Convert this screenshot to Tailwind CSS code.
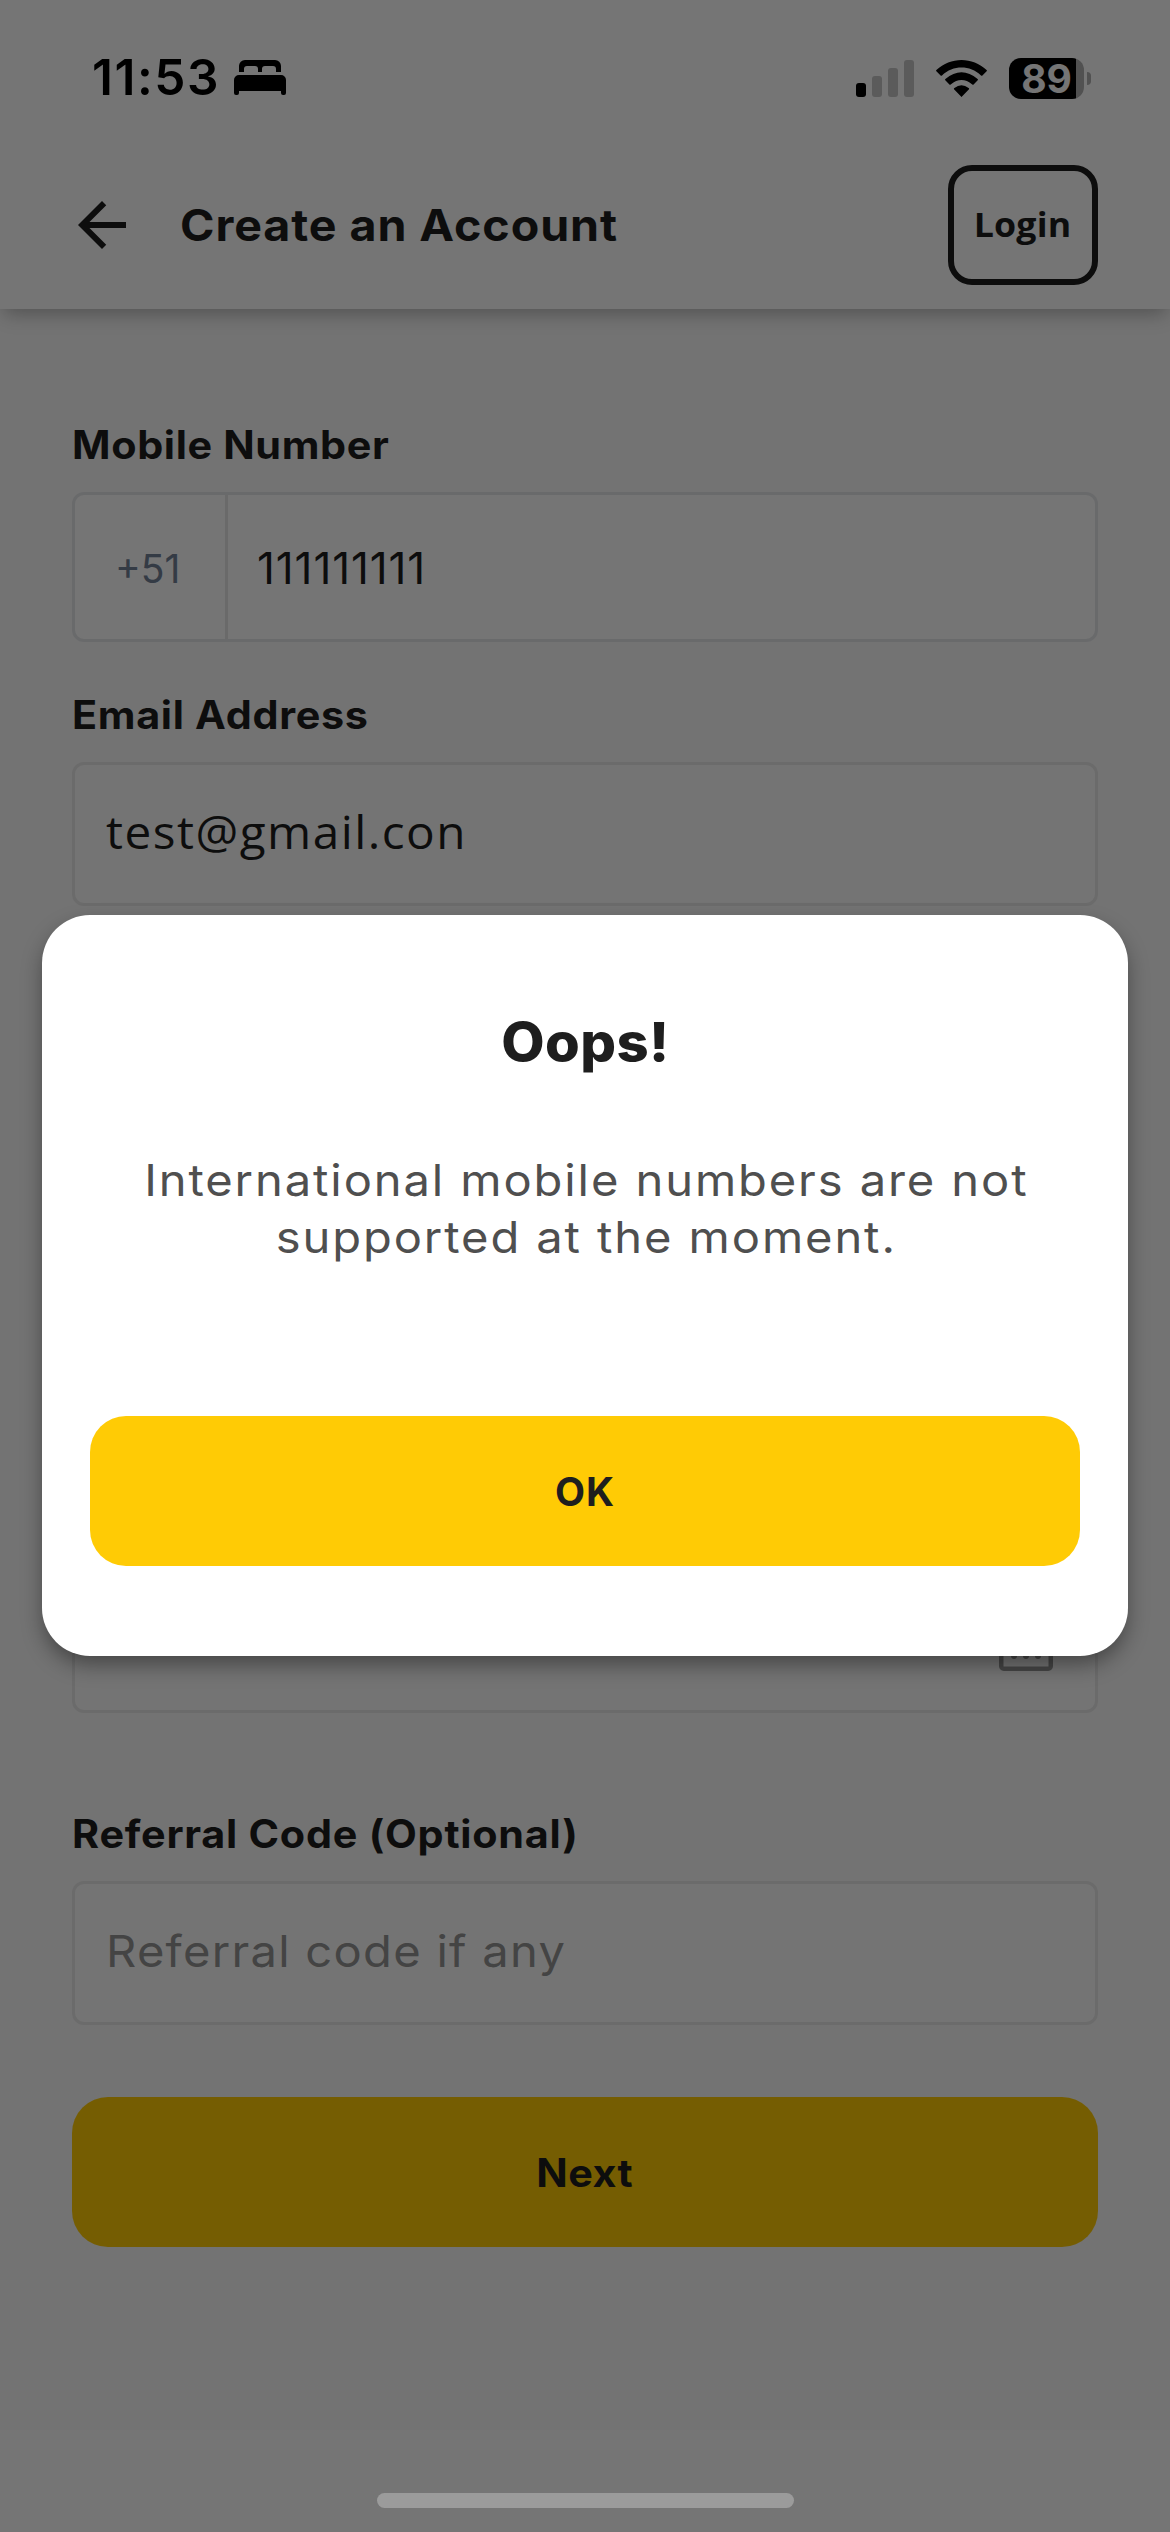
<!DOCTYPE html>
<html lang="en">
<head>
<meta charset="utf-8">
<title>Create an Account</title>
<script src="https://cdn.jsdelivr.net/npm/@tailwindcss/browser@4"></script>
</head>
<body class="relative w-[1170px] h-[2532px] overflow-hidden bg-white font-['Inter',sans-serif] text-[#1e1e1e]">
  <div class="flex h-full flex-col">
    <!-- Status bar and app bar -->
    <header class="relative z-10 h-[309px] shrink-0 bg-white shadow-[0_9px_18px_-4px_rgba(0,0,0,0.28)]">
      <div class="flex h-[156px] items-center justify-between pl-[92px] pr-[79px] text-black">
        <div class="flex items-center gap-[14px]">
          <span class="text-[49.5px] leading-none font-semibold tracking-[1.56px]">11:53</span>
          <svg class="h-[36px] w-[52px]" viewBox="0 0 52 36">
            <path d="M5 12V6a6 6 0 0 1 6-6h30a6 6 0 0 1 6 6v6h-5V9a3 3 0 0 0-3-3H31a3 3 0 0 0-3 3v3h-4V9a3 3 0 0 0-3-3H13a3 3 0 0 0-3 3v3Z"/>
            <path d="M0 20a5 5 0 0 1 5-5h42a5 5 0 0 1 5 5v13a2 2 0 0 1-2 2h-1a2 2 0 0 1-2-2v-2H5v2a2 2 0 0 1-2 2H2a2 2 0 0 1-2-2Z"/>
          </svg>
        </div>
        <div class="flex items-center">
          <svg class="h-[37px] w-[58px]" viewBox="0 0 58 37">
            <rect y="23" width="10" height="14" rx="3"/>
            <g opacity=".22"><rect x="16" y="16" width="10" height="21" rx="3"/><rect x="32" y="8" width="10" height="29" rx="3"/><rect x="48" width="10" height="37" rx="3"/></g>
          </svg>
          <svg class="ml-[22px] h-[37px] w-[51px]" viewBox="0 0 51 37">
            <path d="M25.500 37L18 29.300Q17.600 28.500 18.400 28Q25.500 22.500 32.600 28Q33.400 28.500 33 29.300Z"/>
            <path d="M9.300 20.300Q8.600 19.700 9.400 18.900Q25.500 5.500 41.600 18.900Q42.400 19.700 41.700 20.300L37.600 24.500Q37 25 36.300 24.400Q25.500 15.500 14.700 24.400Q14 25 13.400 24.500Z"/>
            <path d="M.400 11.300Q-.200 10.700 .400 10.100C14.500-3.300 36.500-3.300 50.600 10.100Q51.200 10.700 50.600 11.300L46.400 15.500Q45.700 16 45 15.400C34 5 17 5 6 15.400Q5.300 16 4.600 15.500Z"/>
          </svg>
          <div class="ml-[22px] flex h-[41px] w-[75px] items-center justify-center rounded-[12px] bg-[linear-gradient(to_right,#000_67px,#b0b0b0_67px)]">
            <span class="text-[39px] leading-[41px] font-bold text-white">89</span>
          </div>
          <div class="ml-[3px] h-[13px] w-[4px] rounded-r-full bg-[#b0b0b0]"></div>
        </div>
      </div>
      <div class="flex h-[138px] items-center pl-[66px] pr-[72px]">
        <svg class="size-[72px]" viewBox="0 0 24 24" fill="currentColor"><path d="M20 11H7.830l5.590-5.590L12 4l-8 8 8 8 1.410-1.410L7.830 13H20v-2z"/></svg>
        <h1 class="ml-[42px] origin-left scale-x-[1.06] text-[44px] leading-[54px] font-bold tracking-[0.85px]">Create an Account</h1>
        <button class="ml-auto flex h-[120px] w-[150px] items-center justify-center rounded-[24px] border-[6px] border-[#1e1e1e] pb-[2px] font-['Open_Sans',sans-serif] text-[34px] leading-none font-bold"><span class="scale-x-[1.05] tracking-[0.2px]">Login</span></button>
      </div>
    </header>

    <!-- Registration form -->
    <main class="flex h-[2121px] shrink-0 flex-col bg-[#fafafa] px-[72px] pt-[113px]">
      <label class="h-[46px] origin-left scale-x-[1.06] self-start text-[39px] leading-[46px] font-bold tracking-[0.6px]">Mobile Number</label>
      <div class="mt-[24px] flex h-[150px] shrink-0 items-stretch rounded-[12px] border-[3px] border-[#e5e7ea] bg-[#fefefe]">
        <span class="flex w-[153px] items-center border-r-[3px] border-[#e7e7e7] pl-[40px] pt-[2px] text-[39px] leading-none text-[#718096]">+51</span>
        <span class="flex items-center pl-[29px] pt-[2px] text-[44px] leading-none tracking-[0.9px]">111111111</span>
      </div>
      <label class="mt-[50px] h-[46px] origin-left scale-x-[1.06] self-start text-[39px] leading-[46px] font-bold tracking-[0.64px]">Email Address</label>
      <div class="mt-[24px] flex h-[144px] shrink-0 items-center rounded-[12px] border-[3px] border-[#e9e9e9] bg-[#fdfdfd] pb-[5px] pl-[31px] font-['Open_Sans',sans-serif] text-[45px] leading-none"><span class="origin-left scale-x-[1.06] tracking-[1.4px]">test@gmail.con</span></div>

      <!-- Date picker field -->
      <div class="mt-[663px] flex h-[144px] shrink-0 items-center justify-end rounded-[12px] border-[3px] border-[#e9e9e9] bg-[#fdfdfd] pr-[42px]">
        <svg class="h-[60px] w-[54px]" viewBox="0 0 54 60" fill="none" stroke="#999999" stroke-width="4.500">
          <rect x="2.250" y="8.250" width="49.500" height="49.500" rx="2.500"/>
          <path d="M2 21h50M14 0v10M40 0v10"/>
          <g fill="#999999" stroke="none"><circle cx="15" cy="45" r="3"/><circle cx="27" cy="45" r="3"/><circle cx="39" cy="45" r="3"/></g>
        </svg>
      </div>

      <label class="mt-[98px] h-[46px] origin-left scale-x-[1.06] self-start text-[39px] leading-[46px] font-bold tracking-[0.7px]">Referral Code (Optional)</label>
      <div class="mt-[24px] flex h-[144px] shrink-0 items-center rounded-[12px] border-[3px] border-[#e9e9e9] bg-[#fdfdfd] pb-[4px] pl-[31px] text-[44px] leading-none text-[#949494]"><span class="origin-left scale-x-[1.07] tracking-[1.2px]">Referral code if any</span></div>
      <button class="mt-[72px] flex h-[150px] shrink-0 items-center justify-center rounded-[36px] bg-[#ffcb05] text-[39px] leading-[46px] font-bold"><span class="scale-x-[1.06] pt-[2px] tracking-[0.43px]">Next</span></button>
    </main>
  </div>

  <!-- Modal barrier -->
  <div class="absolute inset-0 z-20 flex flex-col items-center bg-black/54">
    <section class="mt-[915px] flex h-[741px] w-[1086px] flex-col items-center rounded-[48px] bg-white px-[48px] pt-[95px] shadow-[0_10px_22px_-2px_rgba(0,0,0,0.42)]">
      <h2 class="scale-x-[1.06] text-[53px] leading-[64px] font-extrabold tracking-[0.36px]">Oops!</h2>
      <p class="mt-[78px] scale-x-[1.07] pl-[2px] text-center text-[44px] leading-[57px] tracking-[1.78px] whitespace-nowrap text-[#4f4f4f]">International mobile numbers are not<br>supported at the moment.</p>
      <button class="mt-[150px] h-[150px] w-full shrink-0 rounded-[36px] bg-[#ffcb05] pt-[1px] text-[39px] leading-none font-bold tracking-[0.95px]">OK</button>
    </section>
    <div class="mt-auto mb-[24px] h-[15px] w-[417px] rounded-full bg-[#9b9b9b]"></div>
  </div>
</body>
</html>
